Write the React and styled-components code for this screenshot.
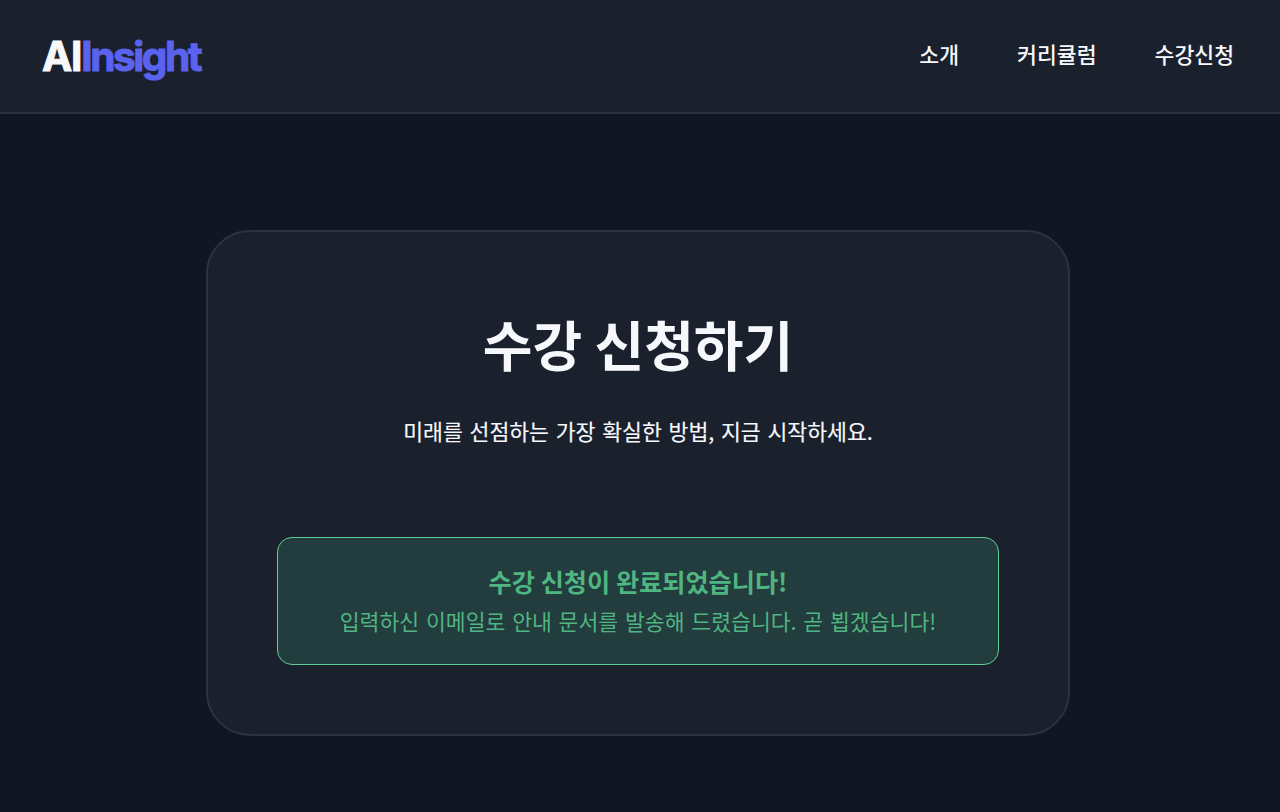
import React from 'react';
import styled, { createGlobalStyle } from 'styled-components';

const GlobalStyle = createGlobalStyle`
    * {
        box-sizing: border-box;
    }

    body {
        background: #101623;
        color: #f7f8fc;
        font-family: 'Noto Sans CJK KR', sans-serif;
        margin: 0;
        overflow: hidden;
    }
`;

const Header = styled.header`
    align-items: center;
    background: #1a212d;
    border-bottom: 2px solid #2a303c;
    display: flex;
    height: 114px;
    justify-content: space-between;
    padding: 0 46px 0 42px;
`;

const Logo = styled.a`
    -webkit-text-stroke: 1px currentColor;
    color: #f7f8fc;
    font-family: Inter, sans-serif;
    font-size: 40.5px;
    font-weight: 700;
    letter-spacing: -1.2px;
    line-height: 1;
    padding-top: 2px;
`;

const Accent = styled.span`
    color: #5a62ee;
    letter-spacing: -2.4px;
`;

const Nav = styled.nav`
    display: flex;
    gap: 58px;
    padding-bottom: 4px;
`;

const NavLink = styled.a`
    font-size: 21.6px;
    font-weight: 500;
    line-height: 32px;
    white-space: nowrap;
`;

const Main = styled.main`
    display: flex;
    height: 698px;
    padding: 116px 0 0 206px;
`;

const Card = styled.section`
    background: #1a212d;
    border: 2px solid #2c3340;
    border-radius: 44px;
    height: 506px;
    padding: 69px;
    text-align: center;
    width: 864px;
`;

const Title = styled.h1`
    font-size: 54px;
    font-weight: 700;
    line-height: 86px;
    margin: 0;
`;

const Lead = styled.p`
    -webkit-text-stroke: 0.15px currentColor;
    font-size: 21.6px;
    line-height: 38px;
    margin: 25px 0 87px;
    word-spacing: 1.9px;
`;

const Notice = styled.div`
    background: #233c3e;
    border: 1px solid #5fce93;
    border-radius: 15px;
    color: #4fb581;
    height: 128px;
    padding: 23px 0;
`;

const NoticeTitle = styled.strong`
    display: block;
    font-size: 25.2px;
    font-weight: 700;
    line-height: 40px;
`;

const NoticeText = styled.p`
    font-size: 21.6px;
    line-height: 40px;
    margin: 0;
    word-spacing: 1.9px;
`;

const links = ['소개', '커리큘럼', '수강신청'];

const App = () => (
    <>
        <GlobalStyle />
        <Header>
            <Logo>
                AI<Accent>Insight</Accent>
            </Logo>
            <Nav>
                {links.map(link => (
                    <NavLink key={link}>{link}</NavLink>
                ))}
            </Nav>
        </Header>
        <Main>
            <Card>
                <Title>수강 신청하기</Title>
                <Lead>미래를 선점하는 가장 확실한 방법, 지금 시작하세요.</Lead>
                <Notice>
                    <NoticeTitle>수강 신청이 완료되었습니다!</NoticeTitle>
                    <NoticeText>
                        입력하신 이메일로 안내 문서를 발송해 드렸습니다. 곧
                        뵙겠습니다!
                    </NoticeText>
                </Notice>
            </Card>
        </Main>
    </>
);

export default App;
